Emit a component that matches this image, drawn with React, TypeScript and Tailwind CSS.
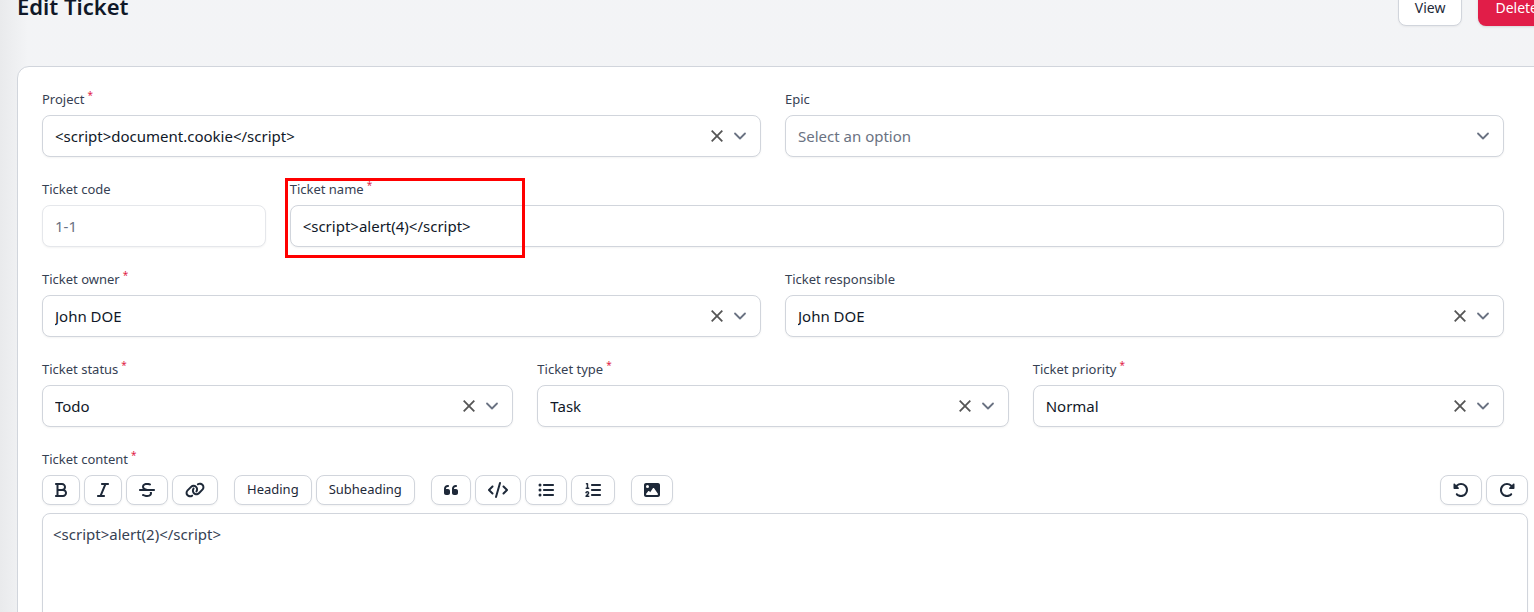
import type { ReactNode } from "react";
import {
  FaBold,
  FaCode,
  FaImage,
  FaItalic,
  FaLink,
  FaListUl,
  FaQuoteLeft,
  FaRotateLeft,
  FaRotateRight,
  FaStrikethrough,
} from "react-icons/fa6";

function NumberedListIcon() {
  return (
    <svg viewBox="0 0 576 512" className="h-4 w-[18px]" fill="currentColor" aria-hidden="true">
      <path d="M55.1 56.04C55.1 42.78 66.74 32.04 79.1 32.04H111.1C125.3 32.04 135.1 42.78 135.1 56.04V176H151.1C165.3 176 175.1 186.8 175.1 200C175.1 213.3 165.3 224 151.1 224H71.1C58.74 224 47.1 213.3 47.1 200C47.1 186.8 58.74 176 71.1 176H87.1V80.04H79.1C66.74 80.04 55.1 69.29 55.1 56.04zM118.7 341.2C112.1 333.8 100.4 334.3 94.65 342.4L83.53 357.9C75.83 368.7 60.84 371.2 50.05 363.5C39.26 355.8 36.77 340.8 44.47 330.1L55.59 314.5C79.33 281.2 127.9 278.8 154.8 309.6C176.1 333.1 175.6 370.5 153.7 394.3L118.8 432H152C165.3 432 176 442.7 176 456C176 469.3 165.3 480 152 480H64C54.47 480 45.84 474.4 42.02 465.6C38.19 456.9 39.9 446.7 46.36 439.7L118.4 361.7C123.7 355.9 123.8 347.1 118.7 341.2zM512 64C529.7 64 544 78.33 544 96C544 113.7 529.7 128 512 128H256C238.3 128 224 113.7 224 96C224 78.33 238.3 64 256 64H512zM512 224C529.7 224 544 238.3 544 256C544 273.7 529.7 288 512 288H256C238.3 288 224 273.7 224 256C224 238.3 238.3 224 256 224H512zM512 384C529.7 384 544 398.3 544 416C544 433.7 529.7 448 512 448H256C238.3 448 224 433.7 224 416C224 398.3 238.3 384 256 384H512z" />
    </svg>
  );
}

function FieldLabel({ id, label, required }: { id: string; label: string; required?: boolean }) {
  return (
    <label htmlFor={id} className="block text-[13px] leading-4 text-gray-700">
      {label}
      {required && <sup className="ml-[3px] text-[10px] leading-none text-[#e11d48]">*</sup>}
    </label>
  );
}

type FieldProps = {
  id: string;
  label: string;
  value: string;
  required?: boolean;
  clearable?: boolean;
  className: string;
};

function SelectField({ id, label, value, required, clearable, className }: FieldProps) {
  return (
    <div className={`flex flex-col gap-2 ${className}`}>
      <FieldLabel id={id} label={label} required={required} />
      <div className="relative">
        <select
          id={id}
          className={`block h-[42px] w-full appearance-none rounded-lg border border-gray-300 bg-white pr-16 pl-3 text-[15px] shadow-xs ${clearable ? "text-gray-900" : "text-gray-500"}`}
        >
          <option>{value}</option>
        </select>
        <div className="pointer-events-none absolute inset-y-0 right-[13px] flex items-center gap-[7px]">
          {clearable && (
            <button type="button" aria-label={`Clear ${label}`} className="pointer-events-auto flex size-4 items-center justify-center text-[#555555]">
              <svg viewBox="0 0 12 12" className="size-3" fill="none" stroke="currentColor" strokeWidth="1.8">
                <path d="M.7.7l10.6 10.6M11.3.7L.7 11.3" />
              </svg>
            </button>
          )}
          <svg viewBox="0 0 16 16" className="size-4 text-gray-500" fill="none" stroke="currentColor" strokeWidth="1.8" strokeLinecap="round" strokeLinejoin="round">
            <path d="M3 5.5l5 5 5-5" />
          </svg>
        </div>
      </div>
    </div>
  );
}

function ToolButton({ label, children }: { label: string; children: ReactNode }) {
  return (
    <button
      type="button"
      aria-label={label}
      className="flex h-[30px] items-center rounded-lg border border-gray-300 bg-white px-3 text-[13px] text-gray-800 shadow-xs"
    >
      {children}
    </button>
  );
}

export default function App() {
  return (
    <div className="h-screen overflow-hidden bg-gray-100 bg-linear-to-r from-[#e9eaec] to-gray-100 to-[28px] pl-[17px] font-['Noto_Sans',sans-serif]">
      <header className="-mt-[10px] -mr-[21px] flex items-start justify-between">
        <h1 className="text-[22px] leading-8 font-semibold text-gray-900">Edit Ticket</h1>
        <div className="flex gap-4">
          <a href="#view" className="flex h-9 items-center rounded-lg border border-gray-300 bg-white px-4 text-sm text-gray-800 shadow-xs">
            View
          </a>
          <button type="button" className="flex h-9 items-center rounded-lg border border-transparent bg-[#e11d48] px-4 text-sm text-white shadow-sm">
            Delete
          </button>
        </div>
      </header>

      <form className="mt-10 -mr-[19px] flex flex-col gap-6 rounded-xl border border-gray-300 bg-white p-6">
        <div className="mr-6 grid grid-cols-12 gap-6">
          <SelectField id="project" label="Project" value="<script>document.cookie</script>" required clearable className="col-span-6" />
          <SelectField id="epic" label="Epic" value="Select an option" className="col-span-6" />

          <div className="col-span-2 flex flex-col gap-2">
            <FieldLabel id="code" label="Ticket code" />
            <input id="code" disabled defaultValue="1-1" className="h-[42px] w-full rounded-lg border border-gray-200 bg-white px-3 text-[15px] text-gray-500 shadow-xs" />
          </div>
          <div className="relative col-span-10 flex flex-col gap-2">
            <FieldLabel id="name" label="Ticket name" required />
            <input id="name" defaultValue="<script>alert(4)</script>" className="h-[42px] w-full rounded-lg border border-gray-300 bg-white px-3 text-[15px] text-gray-900 shadow-xs" />
            <div className="pointer-events-none absolute -top-[3px] -left-[5px] h-20 w-60 border-3 border-[#ff0000]" />
          </div>

          <SelectField id="owner" label="Ticket owner" value="John DOE" required clearable className="col-span-6" />
          <SelectField id="responsible" label="Ticket responsible" value="John DOE" clearable className="col-span-6" />

          <SelectField id="status" label="Ticket status" value="Todo" required clearable className="col-span-4" />
          <SelectField id="type" label="Ticket type" value="Task" required clearable className="col-span-4" />
          <SelectField id="priority" label="Ticket priority" value="Normal" required clearable className="col-span-4" />
        </div>

        <div className="flex flex-col gap-2">
          <FieldLabel id="content" label="Ticket content" required />
          <div className="flex justify-between">
            <div className="flex gap-4">
              <div className="flex gap-1">
                <ToolButton label="Bold"><FaBold className="h-4 w-3" /></ToolButton>
                <ToolButton label="Italic"><FaItalic className="h-4 w-3" /></ToolButton>
                <ToolButton label="Strikethrough"><FaStrikethrough className="size-4" /></ToolButton>
                <ToolButton label="Link"><FaLink className="h-4 w-5" /></ToolButton>
              </div>
              <div className="flex gap-1">
                <ToolButton label="Heading">Heading</ToolButton>
                <ToolButton label="Subheading">Subheading</ToolButton>
              </div>
              <div className="flex gap-1">
                <ToolButton label="Quote"><FaQuoteLeft className="h-4 w-[14px]" /></ToolButton>
                <ToolButton label="Code"><FaCode className="h-4 w-5" /></ToolButton>
                <ToolButton label="Bulleted list"><FaListUl className="size-4" /></ToolButton>
                <ToolButton label="Numbered list"><NumberedListIcon /></ToolButton>
              </div>
              <ToolButton label="Image"><FaImage className="size-4" /></ToolButton>
            </div>
            <div className="flex gap-1">
              <ToolButton label="Undo"><FaRotateLeft className="size-4" /></ToolButton>
              <ToolButton label="Redo"><FaRotateRight className="size-4" /></ToolButton>
            </div>
          </div>
          <textarea
            id="content"
            rows={8}
            defaultValue="<script>alert(2)</script>"
            className="block w-full resize-none rounded-lg border border-gray-300 bg-white px-[10px] py-2 text-[15px] leading-6 text-gray-700 shadow-xs"
          />
        </div>
      </form>
    </div>
  );
}
